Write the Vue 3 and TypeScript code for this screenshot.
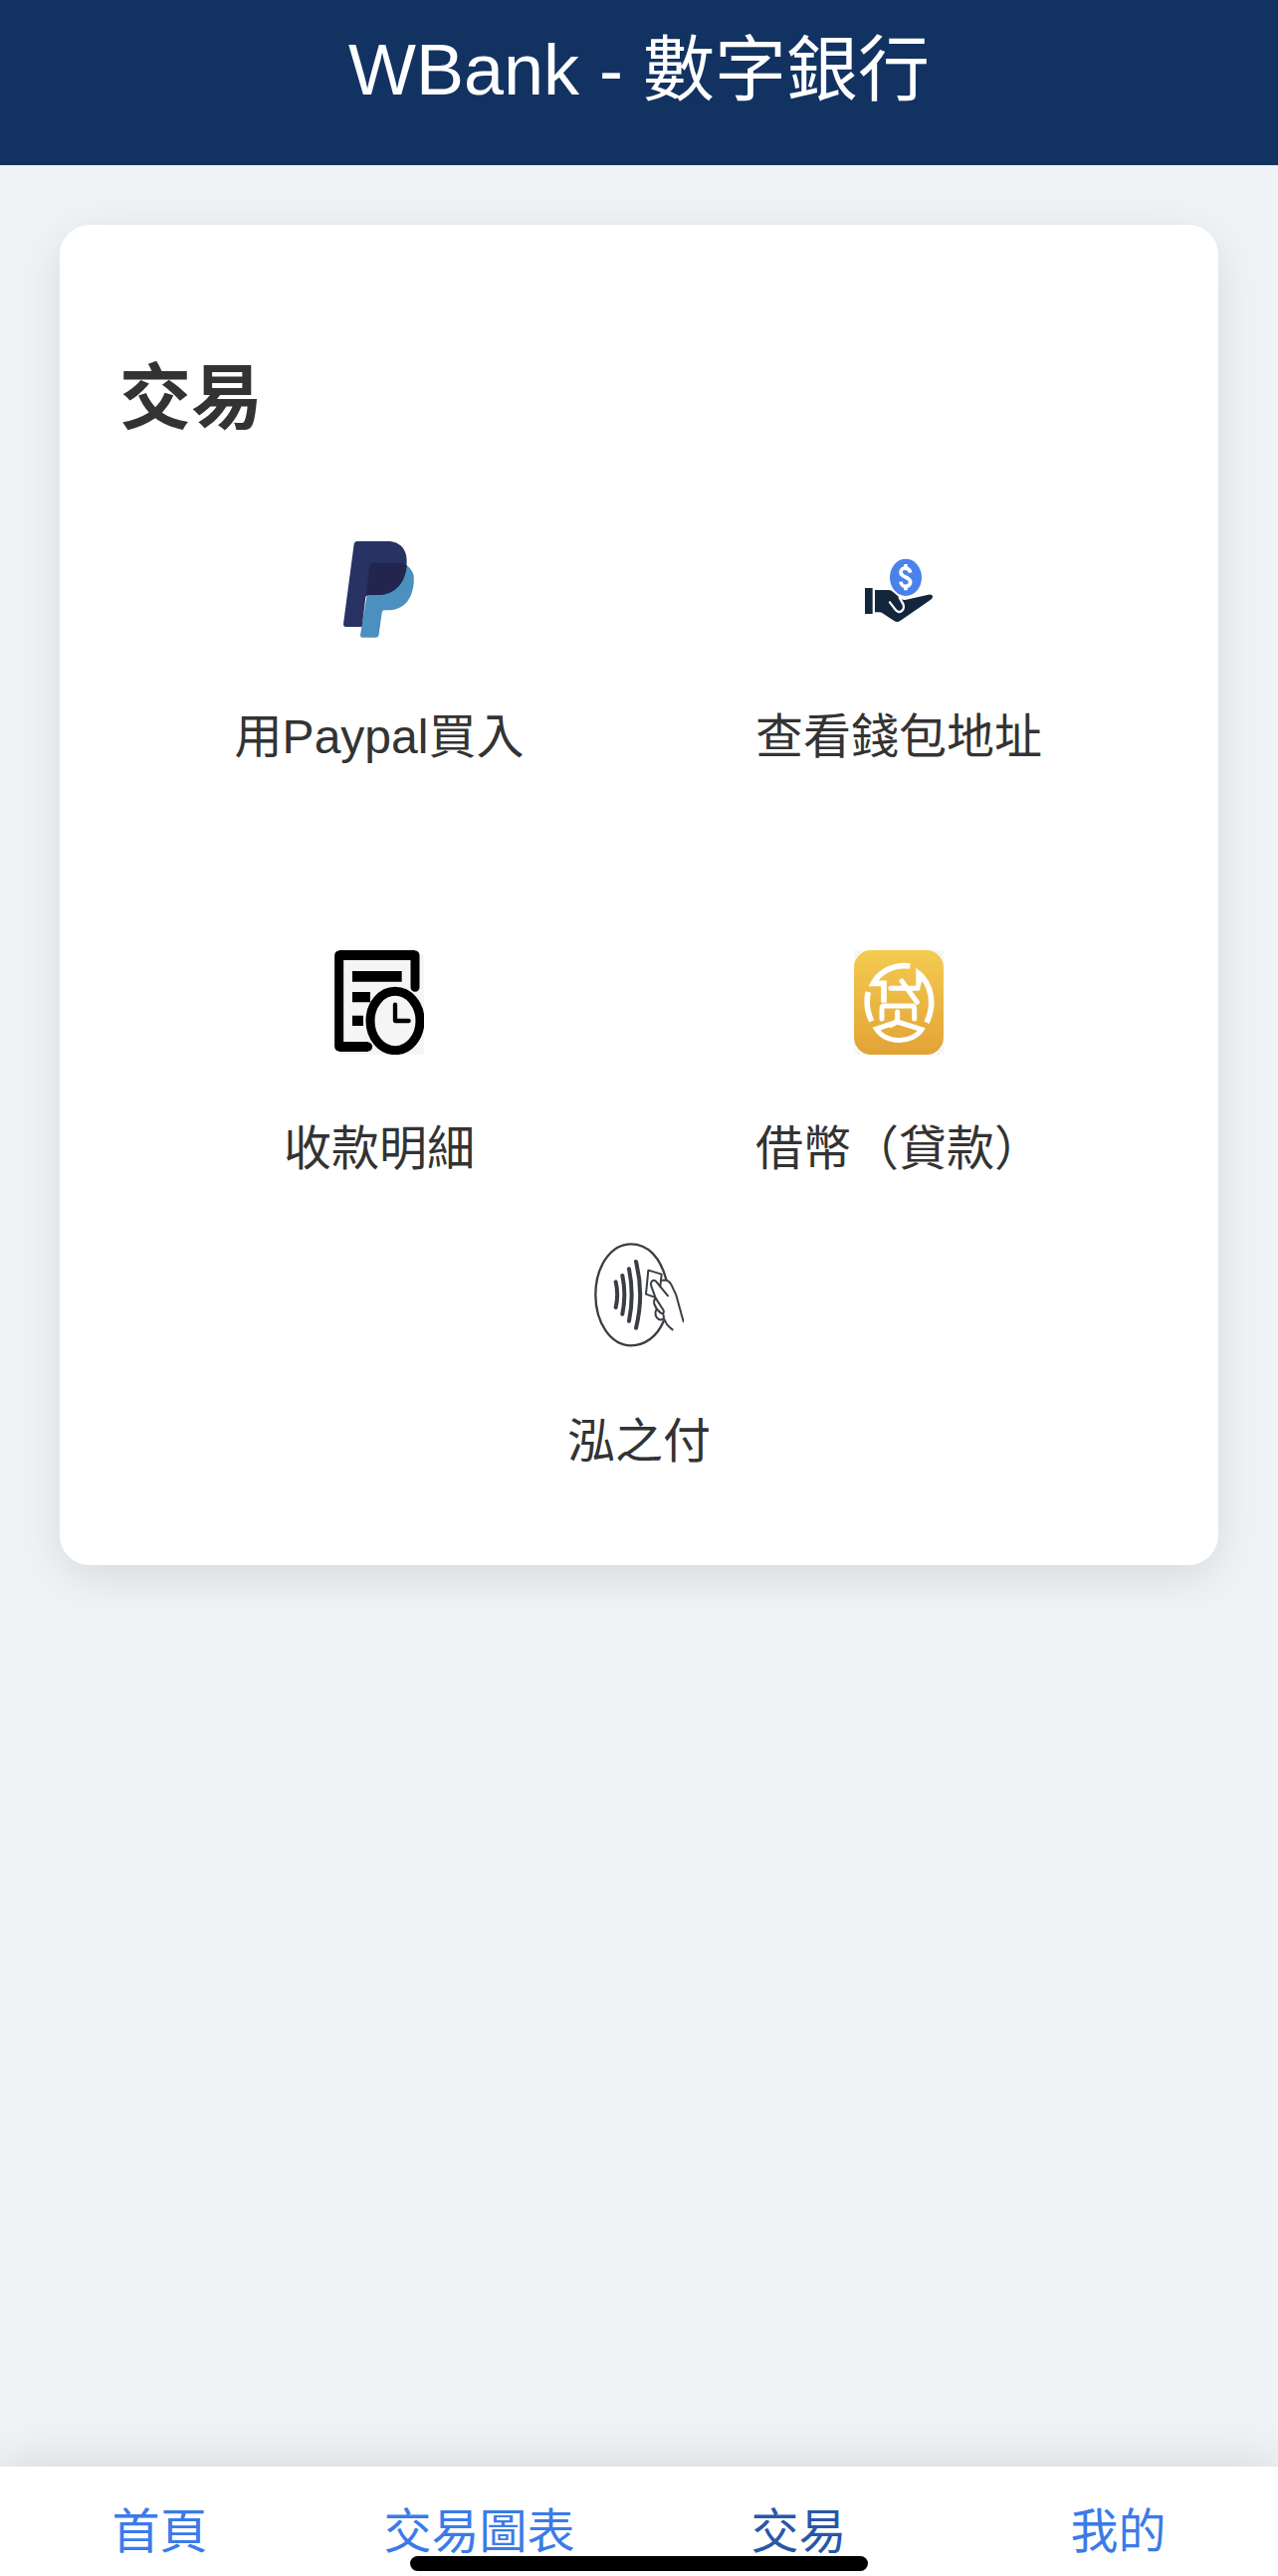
<script setup lang="ts">
import { ref } from 'vue'

type IconName = 'paypal' | 'wallet' | 'records' | 'loan' | 'contactless'

interface Action {
  icon: IconName
  label: string
}

interface Tab {
  id: string
  label: string
}

const rows: Action[][] = [
  [
    { icon: 'paypal', label: '用Paypal買入' },
    { icon: 'wallet', label: '查看錢包地址' },
  ],
  [
    { icon: 'records', label: '收款明細' },
    { icon: 'loan', label: '借幣（貸款）' },
  ],
  [{ icon: 'contactless', label: '泓之付' }],
]

const tabs: Tab[] = [
  { id: 'home', label: '首頁' },
  { id: 'charts', label: '交易圖表' },
  { id: 'trade', label: '交易' },
  { id: 'mine', label: '我的' },
]

const current = ref('trade')
</script>

<template>
  <div class="app">
    <header class="header">
      <h1>WBank - 數字銀行</h1>
    </header>

    <main class="content">
      <section class="card">
        <h2>交易</h2>
        <div v-for="(row, index) in rows" :key="index" class="row">
          <button v-for="action in row" :key="action.label" type="button" class="action">
            <svg v-if="action.icon === 'paypal'" class="icon" viewBox="18 33 270 315" aria-hidden="true">
              <path fill="#4b90be" d="M132 107H226Q250 120 257 145C261 200 238 248 184 250H168Q162 251 161 257L152 323Q151 331 144 332H101Q95 331 96 325Z" />
              <path fill="#283263" d="M86 42H180C216 42 238 68 236 105C235 166 201 203 150 204H121Q113 204 112 211L101 300H51Q44 299 45 292L77 50Q78 43 86 42Z" />
              <path fill="#22264f" d="M132 107H222Q231 108 236 116C231 170 199 203 150 204H121Q115 204 113 208L124 115Q125 108 132 107Z" />
            </svg>

            <svg v-else-if="action.icon === 'wallet'" class="icon" viewBox="24 -27 270 315" aria-hidden="true">
              <ellipse cx="180" cy="91" rx="48" ry="56" fill="#4b82ea" />
              <path d="M194 77C191 60 166 58 165 75C164 92 195 88 194 106C192 123 166 122 165 104M180 51V64M180 116V130" fill="none" stroke="#fff" stroke-width="11" />
              <path fill="#14263c" d="M57 123H80V201H57ZM87 129H130Q136 129 141 134L162 152Q169 160 178 159L248 143Q262 141 261 151Q260 156 253 160L163 222Q154 228 145 222L112 200Q106 196 100 196H87Z" />
              <path d="M132 166L148 187C162 207 181 186 171 169L161 152" fill="none" stroke="#fff" stroke-width="7" stroke-linecap="round" />
            </svg>

            <svg v-else-if="action.icon === 'records'" class="icon" viewBox="48 45 270 315" aria-hidden="true">
              <path fill="#f5f5f5" d="M62 58H318V360H62Z" />
              <path fill="none" stroke="#000" stroke-width="27" stroke-linecap="round" stroke-linejoin="round" d="M291 157V60H62V336H149" />
              <path d="M62 45H291V75H62ZM62 321H149V351H62ZM102 108H251V140H102ZM102 171H156V202H102ZM102 242H135V273H102Z" />
              <ellipse cx="231" cy="258" rx="75" ry="89" fill="#f5f5f5" stroke="#000" stroke-width="27" />
              <path d="M231 209V258H272" fill="none" stroke="#000" stroke-width="13" stroke-linecap="round" stroke-linejoin="round" />
            </svg>

            <svg v-else-if="action.icon === 'loan'" class="icon" viewBox="54 45 270 315" aria-hidden="true">
              <defs>
                <linearGradient id="loan-gold" x1="0" y1="0" x2="0" y2="1">
                  <stop offset="0" stop-color="#f4cb50" />
                  <stop offset="1" stop-color="#e2a336" />
                </linearGradient>
                <pattern id="loan-check" width="16" height="16" patternUnits="userSpaceOnUse">
                  <path fill="#efefef" d="M0 0H8V8H0ZM8 8H16V16H8Z" />
                </pattern>
              </defs>
              <rect x="54" y="45" width="270" height="315" fill="url(#loan-check)" />
              <rect x="54" y="45" width="270" height="315" rx="52" fill="url(#loan-gold)" />
              <g fill="none" stroke="#fff" stroke-width="17">
                <path d="M223 93C176 87 133 107 112 145H144V203" stroke-linejoin="miter" />
                <path d="M97 171C90 200 94 231 107 259" />
                <path d="M246 112C290 148 298 211 273 263" />
                <path d="M121 282C151 328 230 327 258 284L185 261Z" stroke-width="15" stroke-linejoin="miter" />
                <path d="M165 160H246M198 138L244 202M138 252V221Q138 213 146 213H228Q236 213 236 221V252M185 231V250Q183 263 166 271" stroke-width="15" stroke-linecap="round" />
              </g>
              <path fill="#fff" d="M241 97L262 122L254 156H241Z" />
            </svg>

            <svg v-else class="icon" viewBox="51 42 270 315" aria-hidden="true">
              <g fill="none" stroke="#3a3d42" stroke-linecap="round" stroke-linejoin="round">
                <path stroke-width="7" d="M268 153C250 85 212 46 162 46C101 46 55 114 55 199S101 352 162 352C203 352 240 326 260 279" />
                <path stroke-width="12" d="M116 160Q125 199 116 237M136 141Q148 199 136 257M156 121Q172 199 156 278M177 99Q202 199 177 299" />
                <g stroke-width="6">
                  <path d="M232 206L207 197L214 125L254 137L250 174" />
                  <path d="M273 202L236 157C226 151 219 162 223 173L236 209L260 246Q263 257 252 254Q238 244 232 227Q229 215 237 209" />
                  <path d="M253 155H268Q278 157 284 170L298 200L320 280M238 244Q232 257 240 268Q249 279 259 272Q263 266 258 256M263 274Q268 291 287 304" />
                </g>
              </g>
            </svg>
            <span>{{ action.label }}</span>
          </button>
        </div>
      </section>
    </main>

    <nav class="tabs" aria-label="主選單">
      <a
        v-for="tab in tabs"
        :key="tab.id"
        :href="`#${tab.id}`"
        :class="{ active: current === tab.id }"
        @click="current = tab.id"
      >{{ tab.label }}</a>
      <div class="home-indicator"></div>
    </nav>
  </div>
</template>

<style>
body {
  margin: 0;
  background: #eff3f6;
}
</style>

<style scoped>
.app {
  display: flex;
  flex-direction: column;
  min-height: 100vh;
  background: #eff3f6;
  color: #333;
  font-family: "Liberation Sans", "Noto Sans CJK TC", sans-serif;
}

.header {
  padding: 28px 60px 54px;
  background: #123262;
  color: #fff;
  text-align: center;
}

h1 {
  margin: 0;
  font-size: 72px;
  font-weight: 400;
  line-height: 84px;
}

.content {
  flex: 1;
  padding: 60px;
}

.card {
  padding: 60px;
  border-radius: 30px;
  background: #fff;
  box-shadow: 0 12px 45px rgba(0, 0, 0, 0.1);
}

h2 {
  margin: 62px 0 58px;
  font-size: 72px;
  font-weight: 700;
  line-height: 105px;
}

.row {
  display: flex;
}

.row:nth-of-type(1) {
  margin-bottom: 120px;
}

.action {
  display: flex;
  flex: 1;
  flex-direction: column;
  align-items: center;
  gap: 60px;
  padding: 30px;
  border: 0;
  background: none;
  color: inherit;
  font: inherit;
  font-size: 48px;
  line-height: 69px;
  white-space: nowrap;
  cursor: pointer;
}

.icon {
  width: 90px;
  height: 105px;
}

.tabs {
  position: relative;
  display: flex;
  padding: 32px 0 10px;
  background: #fff;
  box-shadow: 0 -6px 45px rgba(0, 0, 0, 0.1);
}

.tabs a {
  flex: 1;
  color: #3b7be8;
  font-size: 48px;
  line-height: 68px;
  text-align: center;
  text-decoration: none;
}

.tabs a.active {
  color: #2857a8;
}

.home-indicator {
  position: absolute;
  bottom: 5px;
  left: 50%;
  width: 460px;
  height: 15px;
  margin-left: -230px;
  border-radius: 8px;
  background: #000;
}
</style>
